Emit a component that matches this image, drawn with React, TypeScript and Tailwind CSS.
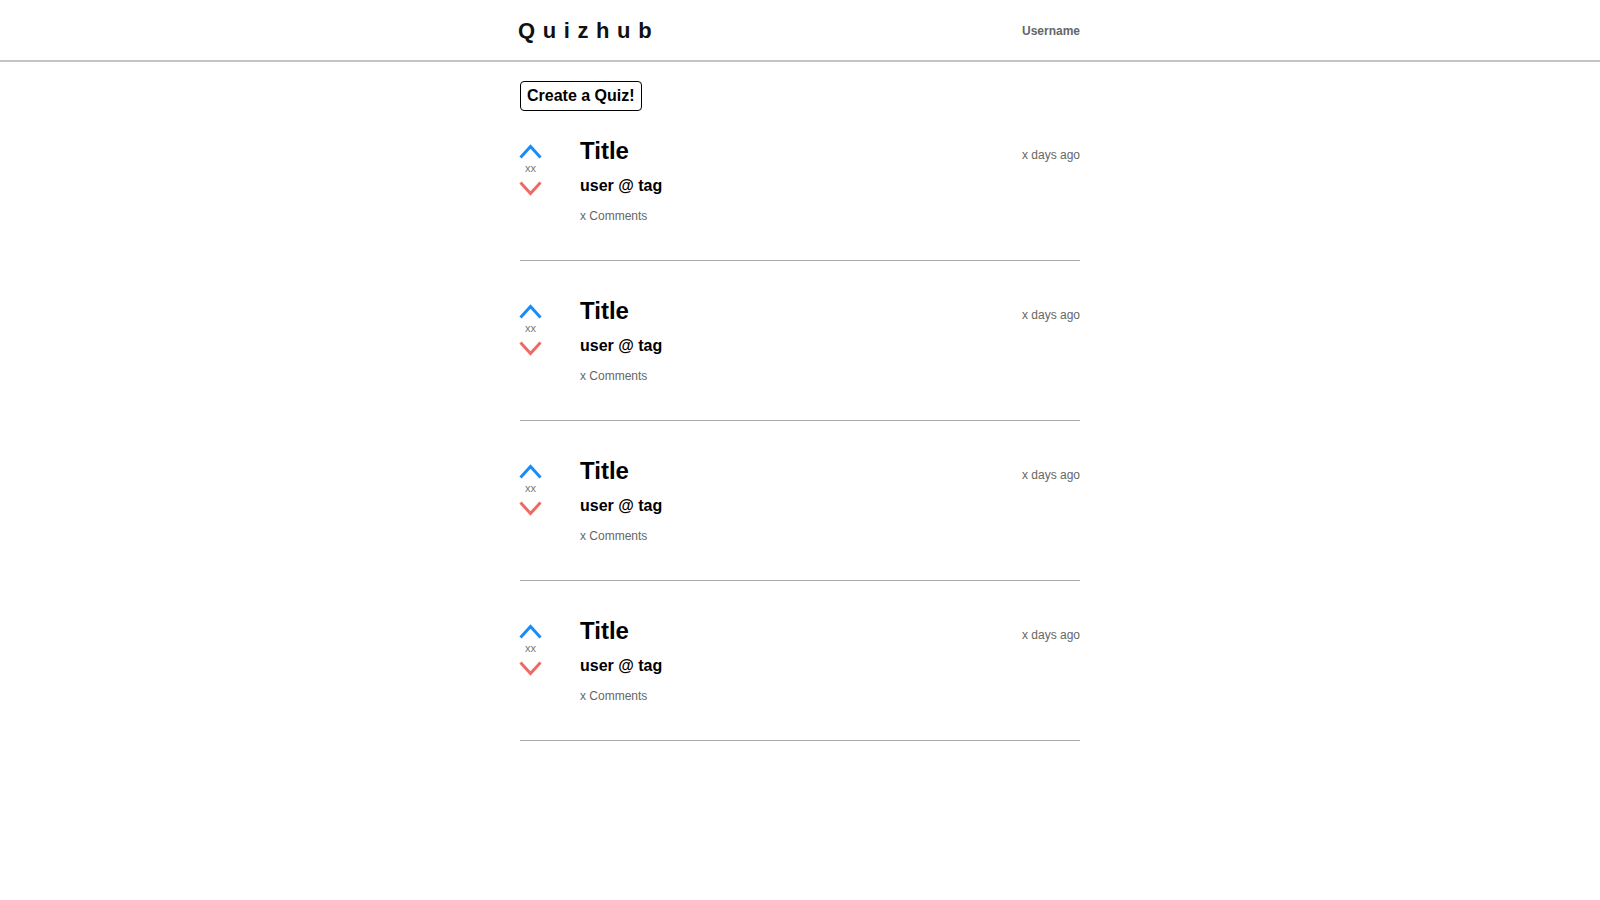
const posts = [1, 2, 3, 4];

function Chevron({ up }: { up: boolean }) {
  return (
    <svg width="23" height="15" viewBox="0 0 23 15" className="block">
      <path
        d={up ? "M1.5 13.5 L11.5 2.5 L21.5 13.5" : "M1.5 1.5 L11.5 12.5 L21.5 1.5"}
        fill="none"
        stroke={up ? "#1a8cf5" : "#ef6a63"}
        strokeWidth="3"
      />
    </svg>
  );
}

function Post() {
  return (
    <div className="flex border-b border-[#a9a9a9] pb-[36px]">
      {/* votes */}
      <div className="flex w-[60px] flex-col items-start pt-[7px]">
        <div className="-ml-[1px] flex w-[23px] flex-col items-center">
          <Chevron up />
          <span className="mt-[3px] text-[11px] leading-[12px] text-[#777]">xx</span>
          <div className="mt-[7px]">
            <Chevron up={false} />
          </div>
        </div>
      </div>
      <div className="flex flex-1 flex-col">
        <div className="flex items-baseline justify-between">
          <h2 className="text-[24px] font-bold leading-[28px] text-black">Title</h2>
          <span className="text-[12px] text-[#666]">x days ago</span>
        </div>
        <div className="mt-[11px] text-[16px] font-bold leading-[20px] text-black">user @ tag</div>
        <div className="mt-[12px] text-[12px] leading-[16px] text-[#666]">x Comments</div>
      </div>
    </div>
  );
}

export default function App() {
  return (
    <div className="min-h-screen bg-white font-['Liberation_Sans',Arial,sans-serif]">
      <header className="border-b-2 border-[#c4c4c4]">
        <div className="mx-auto flex h-[60px] w-[560px] items-center justify-between pt-[1px]">
          <span className="-ml-[2px] text-[22px] font-bold tracking-[7.6px] text-[#111]">Quizhub</span>
          <span className="text-[12px] font-bold text-[#666]">Username</span>
        </div>
      </header>
      <main className="mx-auto w-[560px]">
        <button className="mt-[19px] flex h-[30px] items-center rounded-[4px] border border-black px-[6px] text-[16px] font-bold text-black">
          Create a Quiz!
        </button>
        <div className="mt-[26px] flex flex-col gap-[36px]">
          {posts.map((p) => (
            <Post key={p} />
          ))}
        </div>
      </main>
    </div>
  );
}
